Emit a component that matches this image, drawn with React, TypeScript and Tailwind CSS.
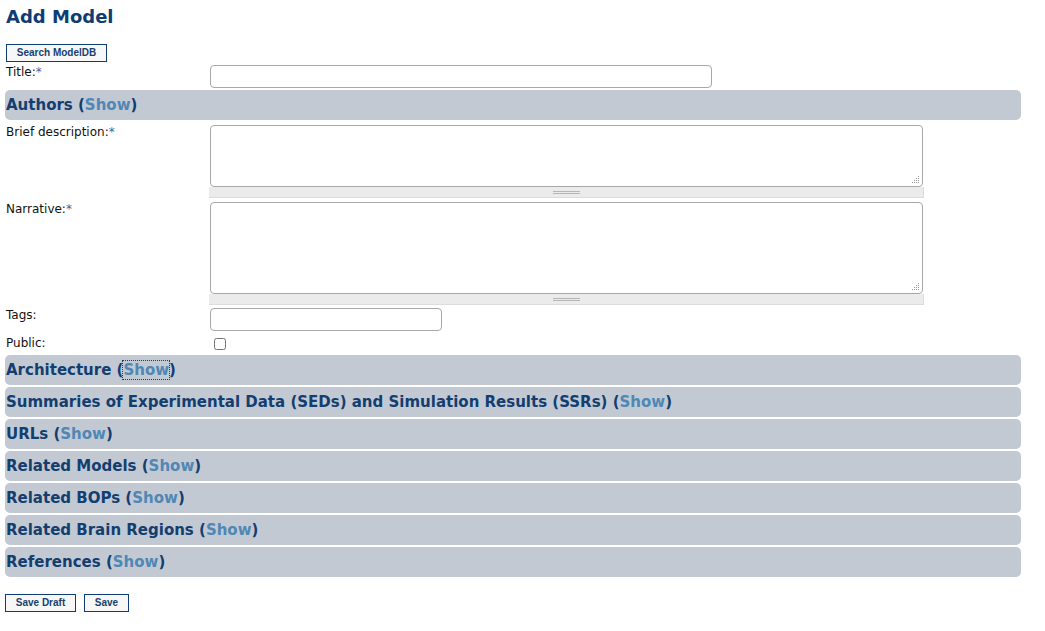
import React from "react";

const dv = { fontFamily: '"DejaVu Sans", Verdana, sans-serif' } as const;
const ar = { fontFamily: '"Liberation Sans", Arial, sans-serif' } as const;

function Bar({ title, focus }: { title: string; focus?: boolean }) {
  return (
    <div
      className="h-[30px] w-[1016px] ml-[5px] rounded-[5px] bg-[#c3c9d3] flex items-center pl-[1px] text-[15px] font-bold text-[#123e70]"
      style={dv}
    >
      <span>
        {title} (
        <span className={"text-[#4f87b5] " + (focus ? "outline-dotted outline-1 outline-[#1a3f6e]" : "")}>Show</span>)
      </span>
    </div>
  );
}

function Dots() {
  return (
    <svg width="9" height="9" className="absolute right-[3px] bottom-[3px]" viewBox="0 0 9 9">
      {[
        [7, 1],
        [5, 3],
        [7, 3],
        [3, 5],
        [5, 5],
        [7, 5],
        [1, 7],
        [3, 7],
        [5, 7],
        [7, 7],
      ].map(([x, y], i) => (
        <rect key={i} x={x} y={y} width="1" height="1" fill="#9a9a9a" />
      ))}
    </svg>
  );
}

function Area({ h }: { h: number }) {
  return (
    <div className="w-[715px] -ml-[1px]">
      <div className="relative ml-[1px] w-[713px]">
        <textarea
          className="block w-[713px] border border-[#aaa8a4] rounded-[4px] resize-none bg-white"
          style={{ height: h }}
        />
        <Dots />
      </div>
      <div className="h-[11px] bg-[#ebebeb] border-b border-r border-[#dcdcdc] flex flex-col items-center justify-center gap-[1px]">
        <div className="w-[27px] h-[1px] bg-[#b5b5b5]" />
        <div className="w-[27px] h-[1px] bg-[#b5b5b5]" />
      </div>
    </div>
  );
}

export default function App() {
  return (
    <div className="bg-white w-[1045px] h-[631px] text-[#111] text-[12px]" style={dv}>
      <h1 className="pl-[6px] pt-[6px] text-[18px] font-bold text-[#0f3c73] leading-[22px]" style={dv}>
        Add Model
      </h1>
      <div className="pl-[6px] mt-[15px]">
        <button
          className="h-[18px] w-[101px] border border-[#0f3c73] bg-[#f7f7f7] text-[10px] font-bold text-[#173f6e] leading-none"
          style={ar}
        >
          Search ModelDB
        </button>
      </div>
      <div className="grid grid-cols-[204px_1fr] pl-[6px] mt-[3px]">
        <div className="leading-[14px]">
          Title:<span className="text-[#3a6a9a]">*</span>
        </div>
        <div className="pb-[2px]">
          <input className="block w-[502px] h-[23px] border border-[#aaa8a4] rounded-[4px] bg-white" />
        </div>
      </div>
      <Bar title="Authors" />
      <div className="grid grid-cols-[204px_1fr] pl-[6px] mt-[5px]">
        <div className="leading-[14px]">
          Brief description:<span className="text-[#3a6a9a]">*</span>
        </div>
        <Area h={62} />
      </div>
      <div className="grid grid-cols-[204px_1fr] pl-[6px] mt-[4px]">
        <div className="leading-[14px]">
          Narrative:<span className="text-[#3a6a9a]">*</span>
        </div>
        <Area h={92} />
      </div>
      <div className="grid grid-cols-[204px_1fr] pl-[6px] mt-[3px]">
        <div className="leading-[14px]">Tags:</div>
        <input className="block w-[232px] h-[23px] border border-[#aaa8a4] rounded-[4px] bg-white" />
      </div>
      <div className="grid grid-cols-[204px_1fr] pl-[6px] mt-[4px] h-[20px]">
        <div className="leading-[14px] pt-[1px]">Public:</div>
        <div className="pt-[3px] pl-[4px]">
          <input type="checkbox" className="block w-[12px] h-[12px] m-0" />
        </div>
      </div>
      <div className="flex flex-col gap-[2px]">
        <Bar title="Architecture" focus />
        <Bar title="Summaries of Experimental Data (SEDs) and Simulation Results (SSRs)" />
        <Bar title="URLs" />
        <Bar title="Related Models" />
        <Bar title="Related BOPs" />
        <Bar title="Related Brain Regions" />
        <Bar title="References" />
      </div>
      <div className="flex gap-[8px] pl-[5px] mt-[17px]">
        <button
          className="h-[18px] w-[71px] border border-[#0f3c73] bg-[#f7f7f7] text-[10px] font-bold text-[#173f6e] leading-none"
          style={ar}
        >
          Save Draft
        </button>
        <button
          className="h-[18px] w-[45px] border border-[#0f3c73] bg-[#f7f7f7] text-[10px] font-bold text-[#173f6e] leading-none"
          style={ar}
        >
          Save
        </button>
      </div>
    </div>
  );
}
